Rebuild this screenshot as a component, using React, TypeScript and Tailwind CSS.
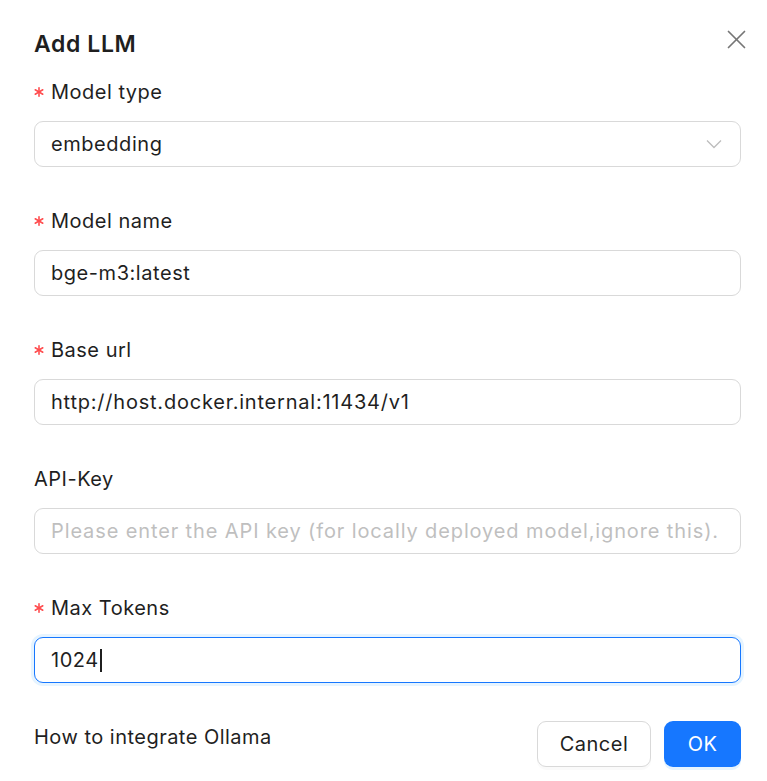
import React from "react";

function Asterisk() {
  return (
    <svg width="10" height="10" viewBox="0 0 10 10" className="mr-[7px] shrink-0">
      <g stroke="#ff4d4f" strokeWidth="1.6" strokeLinecap="round">
        <line x1="5" y1="0.8" x2="5" y2="9.2" />
        <line x1="1.2" y1="2.8" x2="8.8" y2="7.2" />
        <line x1="1.2" y1="7.2" x2="8.8" y2="2.8" />
      </g>
    </svg>
  );
}

function Label({ text, required }: { text: string; required?: boolean }) {
  return (
    <div className="h-[32px] flex items-center text-[20px] text-[#1f1f1f] tracking-[0.5px]">
      {required && <Asterisk />}
      <span>{text}</span>
    </div>
  );
}

const boxBase =
  "mt-[13px] h-[46px] rounded-[9px] border px-[16px] flex items-center text-[20px] bg-white";

export default function App() {
  return (
    <div className="w-[767px] h-[781px] bg-white pl-[34px] pr-[26px] pt-[28px] relative font-['Inter',sans-serif] text-[#1f1f1f]">
      <h2 className="h-[32px] leading-[32px] text-[23px] font-semibold text-[#1f1f1f] tracking-[0.6px]">Add LLM</h2>
      <button className="absolute left-[727px] top-[30px] w-[19px] h-[19px] flex items-center justify-center">
        <svg width="19" height="19" viewBox="0 0 19 19">
          <g stroke="#767676" strokeWidth="1.7" strokeLinecap="round">
            <line x1="1.5" y1="1.5" x2="17.5" y2="17.5" />
            <line x1="17.5" y1="1.5" x2="1.5" y2="17.5" />
          </g>
        </svg>
      </button>

      <div className="mt-[16px] flex flex-col gap-[38px]">
        <div>
          <Label text="Model type" required />
          <div className={boxBase + " border-[#d9d9d9] justify-between pr-[18px]"}>
            <span className="tracking-[0.55px]">embedding</span>
            <svg width="16" height="10" viewBox="0 0 16 10">
              <polyline points="1,1.5 8,8.5 15,1.5" fill="none" stroke="#bdbdbd" strokeWidth="1.3" />
            </svg>
          </div>
        </div>
        <div>
          <Label text="Model name" required />
          <div className={boxBase + " border-[#d9d9d9]"}>
            <span className="tracking-[0.55px]">bge-m3:latest</span>
          </div>
        </div>
        <div>
          <Label text="Base url" required />
          <div className={boxBase + " border-[#d9d9d9]"}>
            <span className="tracking-[0.78px]">http://host.docker.internal:11434/v1</span>
          </div>
        </div>
        <div>
          <Label text="API-Key" />
          <div className={boxBase + " border-[#d9d9d9] overflow-hidden whitespace-nowrap"}>
            <span className="text-[#bfbfbf] tracking-[0.88px]">
              Please enter the API key (for locally deployed model,ignore this).
            </span>
          </div>
        </div>
        <div>
          <Label text="Max Tokens" required />
          <div className={boxBase + " border-[#1677ff] shadow-[0_0_0_3px_rgba(5,145,255,0.1)]"}>
            <span className="tracking-[0.5px]">1024</span>
            <span className="inline-block w-[2px] h-[23px] bg-[#1f1f1f] ml-[1px]" />
          </div>
        </div>
      </div>

      <div className="mt-[38px] flex justify-between items-start">
        <span className="h-[32px] leading-[32px] text-[20px] text-[#1f1f1f] tracking-[0.48px]">How to integrate Ollama</span>
        <div className="flex gap-[13px]">
          <button className="w-[114px] h-[46px] rounded-[9px] border border-[#d9d9d9] bg-white text-[20px] text-[#1f1f1f] tracking-[0.5px] shadow-[0_3px_0_rgba(0,0,0,0.02)]">
            Cancel
          </button>
          <button className="w-[77px] h-[46px] rounded-[9px] bg-[#1677ff] text-[20px] text-white tracking-[0.5px] shadow-[0_3px_0_rgba(5,145,255,0.1)]">
            OK
          </button>
        </div>
      </div>
    </div>
  );
}
